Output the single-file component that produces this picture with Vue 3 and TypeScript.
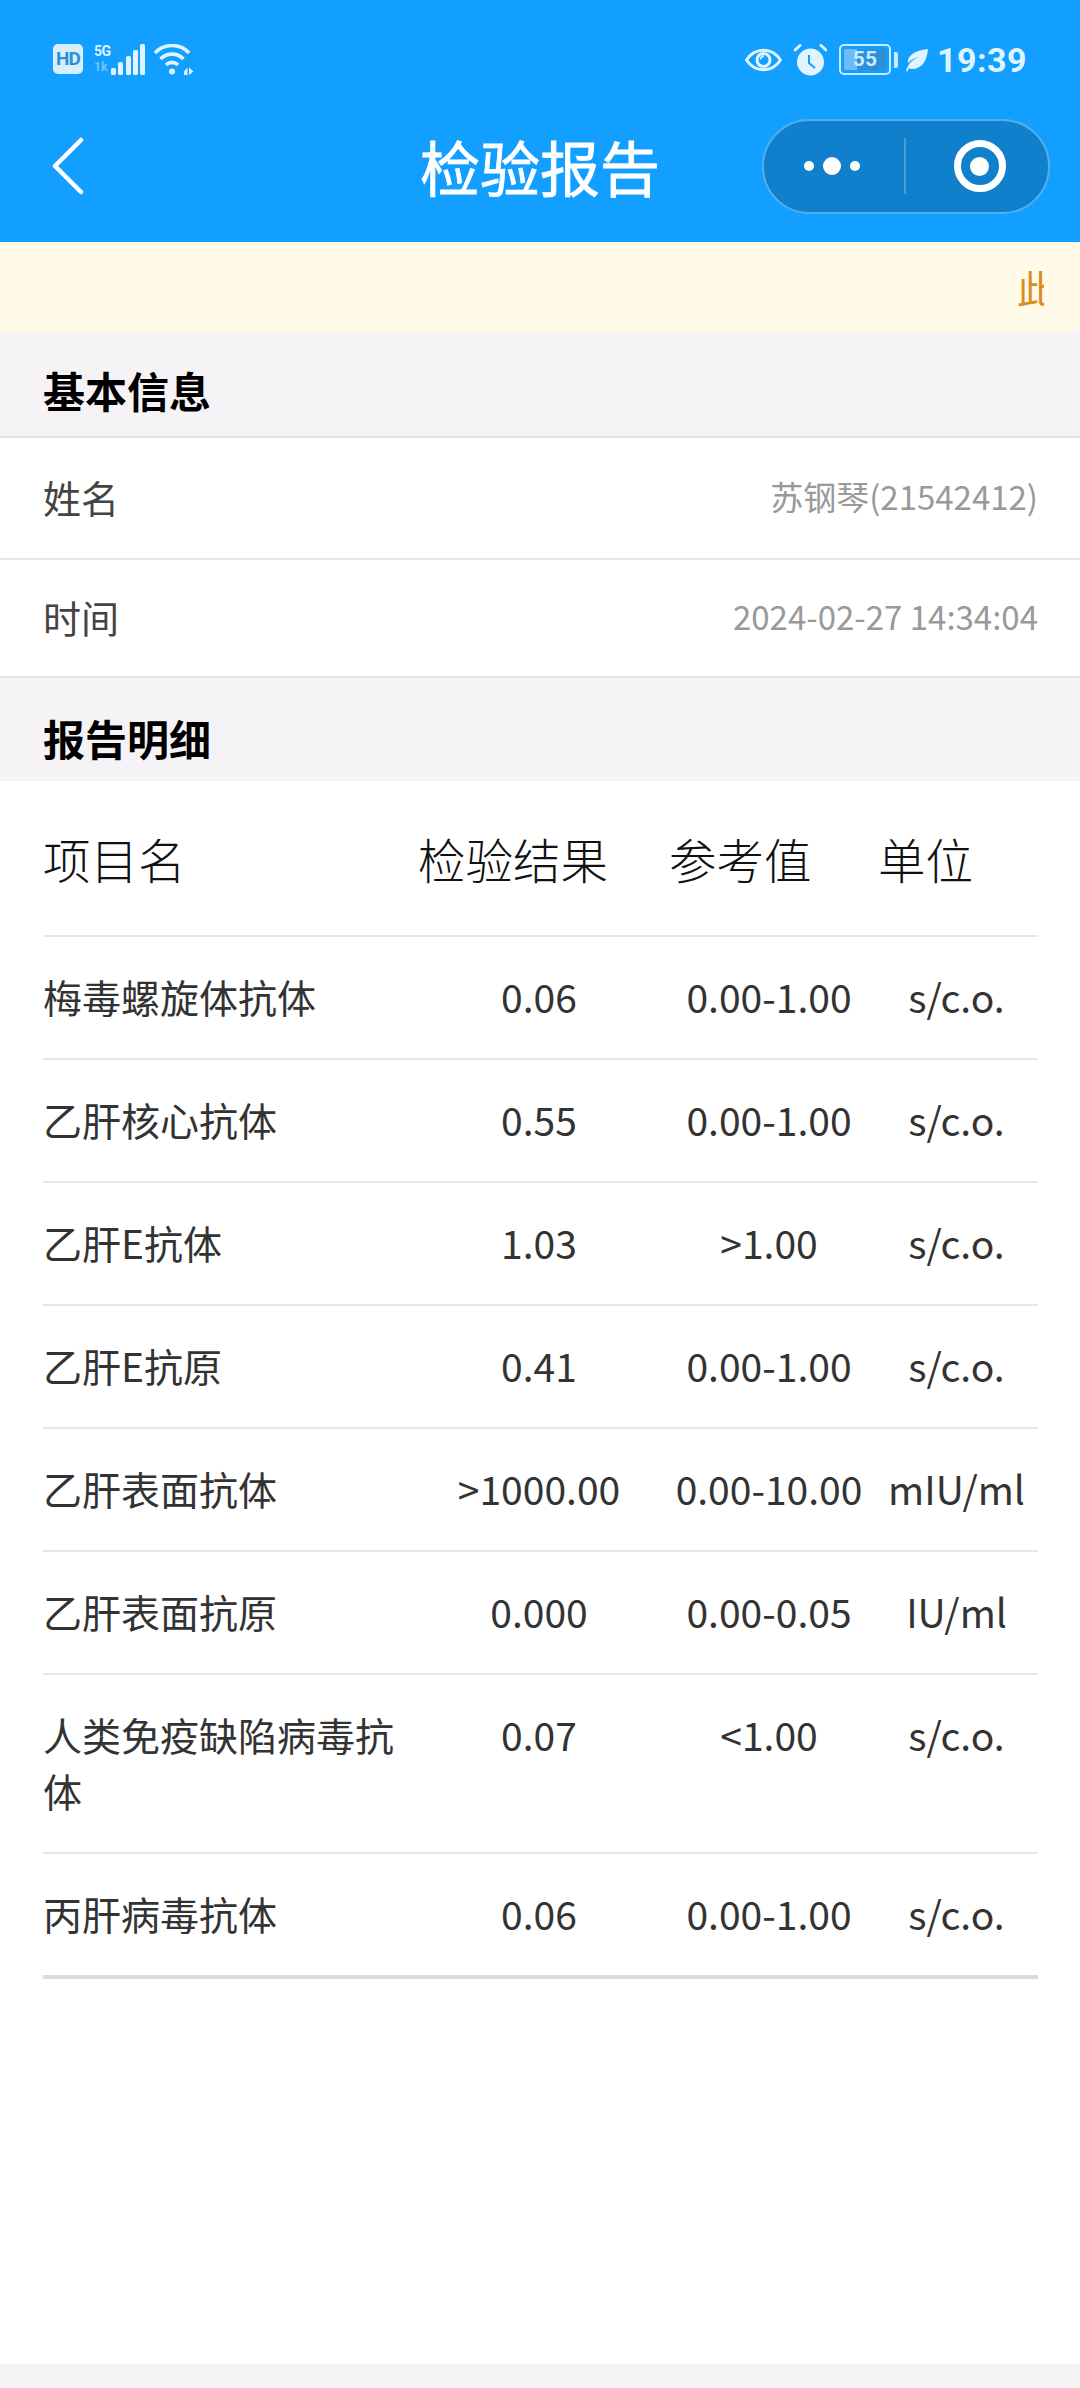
<template>
  <div class="page">
    <header class="top">
      <div class="status">
        <div class="status-left">
          <span class="hd">HD</span>
          <div class="net">
            <span class="net-5g">5G</span>
            <span class="net-speed">1k</span>
          </div>
          <svg class="signal" width="34" height="32" viewBox="0 0 34 32" fill="currentColor">
            <rect x="0" y="24" width="5" height="7" rx="1.5" />
            <rect x="7" y="18" width="5" height="13" rx="1.5" />
            <rect x="15" y="12" width="5" height="19" rx="1.5" />
            <rect x="22" y="6" width="5" height="25" rx="1.5" />
            <rect x="29" y="0" width="5" height="31" rx="1.5" />
          </svg>
          <svg class="wifi" width="40" height="32" viewBox="0 0 40 32" fill="none" stroke="currentColor">
            <path d="M1 9C10 -1 26 -1 35 9" stroke-width="3.6" />
            <path d="M6.500 15C13 8.500 23 8.500 29.500 15" stroke-width="3.600" />
            <path d="M12 21C15.500 17.500 20.500 17.500 24 21" stroke-width="3.600" />
            <circle cx="18" cy="27.500" r="3" fill="currentColor" stroke="none" />
            <path d="M30 27.500L33.500 23.500V31H30ZM35 23.500L39.500 27.500L35 31Z" fill="currentColor" stroke="none" />
          </svg>
        </div>
        <div class="status-right">
          <svg class="eye" width="37" height="28" viewBox="0 0 37 28" fill="none" stroke="currentColor">
            <path d="M1.500 14C10 1 27 1 35.500 14C27 27 10 27 1.500 14Z" stroke-width="3" />
            <circle cx="18.500" cy="14" r="6.500" stroke-width="3" />
            <path d="M15.500 13.500A3.500 3.500 0 0 1 19 10" stroke-width="1.800" />
          </svg>
          <svg class="alarm" width="33" height="32" viewBox="0 0 33 32" fill="currentColor">
            <circle cx="16.500" cy="18" r="13.500" />
            <path d="M1 6L6 1.500M32 6L27 1.500" stroke="currentColor" stroke-width="3" stroke-linecap="round" />
            <path d="M15 11V19L21 24" fill="none" stroke="#129fff" stroke-width="2" />
          </svg>
          <div class="battery">
            <div class="battery-box">
              <span class="battery-fill"></span>
              <span class="battery-num">55</span>
            </div>
            <span class="battery-nub"></span>
          </div>
          <svg class="leaf" width="22" height="23" viewBox="0 0 22 23" fill="currentColor">
            <path d="M22 0C21 12 16 20 6 20C4.500 20 3.500 19.600 3 19L1.500 22.500L0 22C1 18.500 2 17 3 15.500C5 12 9 9.500 13 8C9 8.500 5 10.500 2 14C1 7 8 1.500 22 0Z" />
          </svg>
          <span class="clock">19:39</span>
        </div>
      </div>
      <nav class="nav">
        <div class="nav-back">
          <svg width="34" height="58" viewBox="0 0 34 58" fill="none" stroke="#fff" stroke-width="4.500" stroke-linecap="round" stroke-linejoin="round">
            <path d="M29 3L3 29L29 55" />
          </svg>
        </div>
        <h1 class="nav-title">检验报告</h1>
        <div class="nav-actions">
          <div class="capsule">
            <div class="capsule-part more">
              <span class="dot"></span>
              <span class="dot dot-big"></span>
              <span class="dot"></span>
            </div>
            <span class="capsule-line"></span>
            <div class="capsule-part close">
              <span class="ring"><span class="ring-core"></span></span>
            </div>
          </div>
        </div>
      </nav>
    </header>

    <div class="notice"><div class="notice-clip">此</div></div>

    <h2 class="section first">基本信息</h2>
    <div class="info-row">
      <span class="info-label">姓名</span>
      <span class="info-value">苏钢琴(21542412)</span>
    </div>
    <div class="info-row last">
      <span class="info-label">时间</span>
      <span class="info-value">2024-02-27 14:34:04</span>
    </div>

    <h2 class="section second">报告明细</h2>
    <div class="table">
      <div class="thead">
        <span>项目名</span>
        <span>检验结果</span>
        <span>参考值</span>
        <span>单位</span>
      </div>
      <div v-for="row in rows" :key="row.name" class="tr">
        <span class="td-name">{{ row.name }}</span>
        <span class="td">{{ row.result }}</span>
        <span class="td">{{ row.range }}</span>
        <span class="td">{{ row.unit }}</span>
      </div>
    </div>

    <div class="spacer"></div>
    <div class="foot"></div>
  </div>
</template>

<script setup lang="ts">
type ReportRow = {
  name: string;
  result: string;
  range: string;
  unit: string;
};

const rows: ReportRow[] = [
  { name: "梅毒螺旋体抗体", result: "0.06", range: "0.00-1.00", unit: "s/c.o." },
  { name: "乙肝核心抗体", result: "0.55", range: "0.00-1.00", unit: "s/c.o." },
  { name: "乙肝E抗体", result: "1.03", range: ">1.00", unit: "s/c.o." },
  { name: "乙肝E抗原", result: "0.41", range: "0.00-1.00", unit: "s/c.o." },
  { name: "乙肝表面抗体", result: ">1000.00", range: "0.00-10.00", unit: "mIU/ml" },
  { name: "乙肝表面抗原", result: "0.000", range: "0.00-0.05", unit: "IU/ml" },
  { name: "人类免疫缺陷病毒抗体", result: "0.07", range: "<1.00", unit: "s/c.o." },
  { name: "丙肝病毒抗体", result: "0.06", range: "0.00-1.00", unit: "s/c.o." },
];
</script>

<style>
body {
  background: #fff;
}
</style>

<style scoped>
.page {
  display: flex;
  flex-direction: column;
  min-height: 2388px;
  background: #fff;
  font-family: "Noto Sans CJK SC", "Noto Sans", sans-serif;
  color: #333;
}
.top {
  height: 242px;
  background: #129fff;
  color: #dff4ff;
}
.status {
  display: flex;
  justify-content: space-between;
  height: 118px;
  padding: 44px 53px 0;
  box-sizing: border-box;
}
.status-left,
.status-right {
  display: flex;
  align-items: flex-start;
}
.hd {
  width: 30px;
  height: 30px;
  border-radius: 5px;
  background: #d6effd;
  color: #2a8fd6;
  font: 700 19px/30px "Roboto", sans-serif;
  text-align: center;
  letter-spacing: -1px;
}
.net {
  display: flex;
  flex-direction: column;
  width: 17px;
  margin-left: 11px;
  font-family: "Roboto", sans-serif;
  font-weight: 700;
}
.net-5g {
  font-size: 14px;
  line-height: 15px;
  letter-spacing: -0.5px;
}
.net-speed {
  margin-top: 1px;
  font-size: 12px;
  line-height: 14px;
  color: #73c4fb;
}
.wifi {
  margin-left: 9px;
}
.eye {
  margin-top: 2px;
}
.alarm {
  margin-left: 12px;
}
.battery {
  display: flex;
  align-items: center;
  height: 31px;
  margin-left: 12px;
}
.battery-box {
  position: relative;
  width: 52px;
  height: 31px;
  box-sizing: border-box;
  border: 2.5px solid #c9ebff;
  border-radius: 5px;
  overflow: hidden;
}
.battery-fill {
  position: absolute;
  left: 3px;
  top: 3px;
  bottom: 3px;
  width: 42px;
  border-radius: 2px;
  background: linear-gradient(90deg, #6cbdf6 0 30%, #2a90da 30%);
}
.battery-num {
  position: relative;
  display: block;
  color: #cfeaff;
  font: 700 21px/26px "Roboto", sans-serif;
  text-align: center;
}
.battery-nub {
  width: 4px;
  height: 16px;
  margin-left: 3px;
  border-radius: 0 2px 2px 0;
  background: #c9ebff;
}
.leaf {
  margin: 5px 0 0 8px;
}
.clock {
  margin-left: 9px;
  font: 700 34px/32px "Roboto", sans-serif;
  letter-spacing: 0.5px;
}
.nav {
  display: grid;
  grid-template-columns: 1fr auto 1fr;
  align-items: center;
  height: 96px;
  color: #fff;
}
.nav-back {
  display: flex;
  padding-left: 52px;
}
.nav-title {
  margin: 0;
  font-size: 60px;
  font-weight: 400;
  line-height: 96px;
  -webkit-text-stroke: 0.8px #fff;
}
.nav-actions {
  display: flex;
  justify-content: flex-end;
  padding-right: 30px;
}
.capsule {
  display: flex;
  align-items: center;
  width: 288px;
  height: 95px;
  box-sizing: border-box;
  border: 2px solid #4fb0ee;
  border-radius: 48px;
  background: #1080cc;
}
.capsule-part {
  flex: 1;
  display: flex;
  align-items: center;
  justify-content: center;
  gap: 9px;
}
.capsule-part.more {
  padding-right: 3px;
}
.capsule-part.close {
  padding-left: 6px;
}
.capsule-line {
  width: 2px;
  height: 56px;
  background: #4a9fd9;
}
.dot {
  width: 10px;
  height: 10px;
  border-radius: 50%;
  background: #fff;
}
.dot-big {
  width: 18px;
  height: 18px;
}
.ring {
  display: flex;
  align-items: center;
  justify-content: center;
  width: 52px;
  height: 52px;
  box-sizing: border-box;
  border: 7px solid #fff;
  border-radius: 50%;
}
.ring-core {
  width: 19px;
  height: 19px;
  border-radius: 50%;
  background: #fff;
}
.notice {
  display: flex;
  justify-content: flex-end;
  height: 90px;
  padding-right: 36px;
  background: #fffbe8;
}
.notice-clip {
  width: 27px;
  overflow: hidden;
  color: #de8c1b;
  font-size: 38px;
  line-height: 90px;
  white-space: nowrap;
}
.section {
  margin: 0;
  padding-left: 43px;
  background: #f5f3f6;
  color: #000;
  font-size: 42px;
  font-weight: 700;
  line-height: 60px;
}
.section.first {
  height: 106px;
  padding-top: 28px;
  box-sizing: border-box;
  border-bottom: 2px solid #e2e2e6;
}
.section.second {
  height: 103px;
  padding-top: 30px;
  box-sizing: border-box;
}
.info-row {
  display: flex;
  justify-content: space-between;
  align-items: center;
  height: 122px;
  padding: 0 42px 4px 43px;
  box-sizing: border-box;
  border-bottom: 2px solid #e6e6e6;
}
.info-row.last {
  height: 118px;
}
.info-label {
  font-size: 38px;
  color: #444;
}
.info-value {
  font-size: 33px;
  color: #999;
}
.table {
  padding: 0 42px 0 43px;
}
.thead,
.tr {
  display: grid;
  grid-template-columns: 372px 248px 212px 1fr;
  box-sizing: border-box;
  border-bottom: 2px solid #e6e6e6;
}
.thead {
  align-items: center;
  height: 156px;
  color: #111;
  font-size: 47.5px;
  font-weight: 300;
}
.thead span + span {
  padding-left: 3px;
}
.thead span:nth-child(3) {
  padding-left: 6px;
}
.tr {
  padding: 31px 0 34px;
  font-size: 39px;
  line-height: 56px;
}
.tr:last-child {
  border-bottom: 4px solid #dcdcdc;
}
.td-name {
  padding-right: 14px;
}
.td {
  text-align: center;
  white-space: nowrap;
}
.spacer {
  flex: 1;
}
.foot {
  height: 24px;
  background: #f5f3f6;
}
</style>
